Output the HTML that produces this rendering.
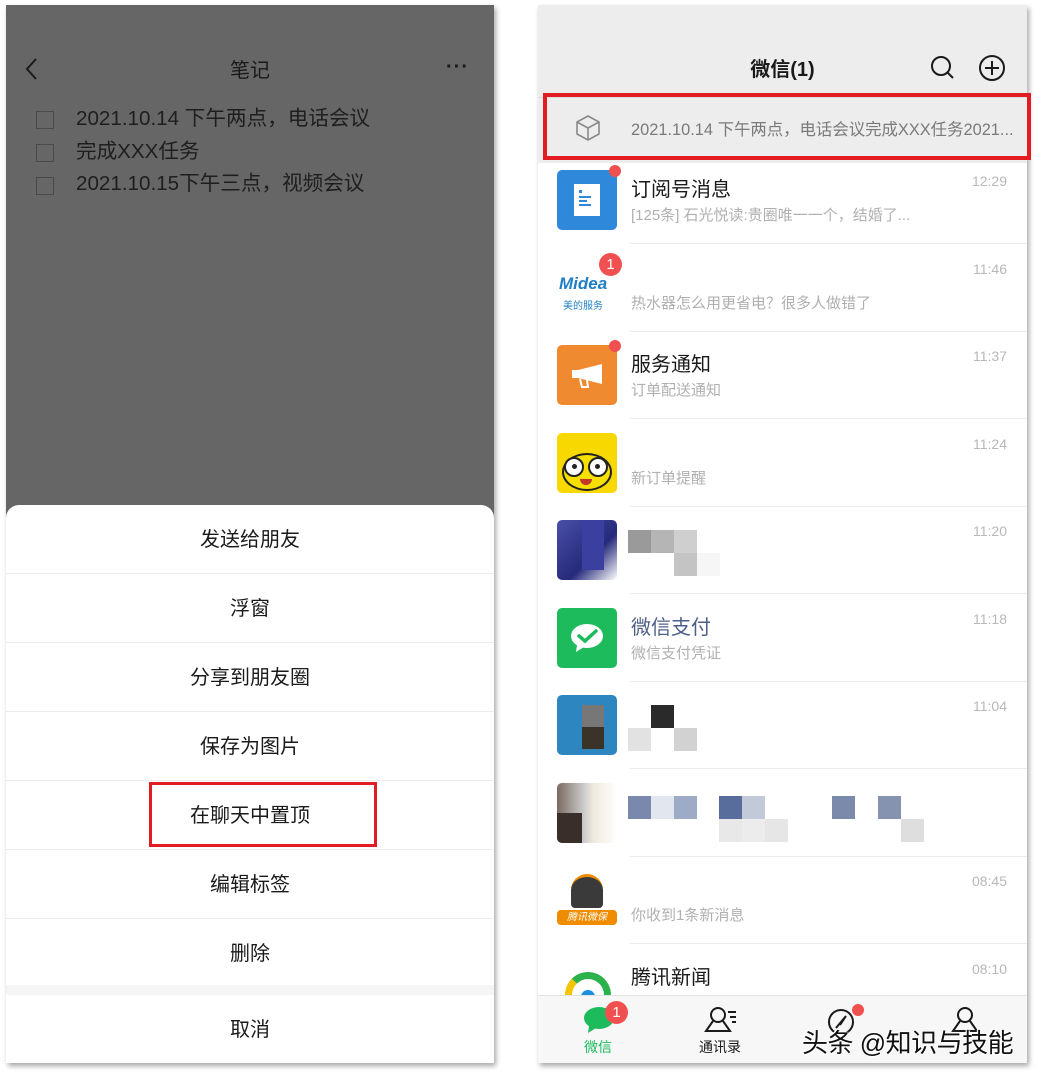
<!DOCTYPE html>
<html><head><meta charset="utf-8">
<style>
*{margin:0;padding:0;box-sizing:border-box}
body{width:1041px;height:1078px;background:#fff;position:relative;overflow:hidden;font-family:"Liberation Sans","Noto Sans CJK SC",sans-serif;color:#1a1a1a}
.a{position:absolute}
.panel{position:absolute;box-shadow:2px 3px 5px rgba(0,0,0,.35)}
.cb{position:absolute;left:36px;width:18px;height:18px;border:1.5px solid #4a4a4a}
.lt{position:absolute;left:76px;font-size:20.6px;color:#1e1e1e;line-height:24px;white-space:nowrap}
.item{position:absolute;left:0;width:488px;height:69px;line-height:70px;text-align:center;font-size:20px;color:#1a1a1a;border-bottom:1px solid #ececec}
.row{position:absolute;left:0;width:489px;height:88px}
.row .sep{position:absolute;left:92px;right:0;top:80px;height:1px;background:#ececec}
.av{position:absolute;left:19px;top:7px;width:60px;height:60px;border-radius:5px;overflow:hidden}
.tt{position:absolute;left:93px;top:10px;font-size:20px;color:#1a1a1a}
.st{position:absolute;left:93px;top:41px;font-size:15px;color:#b0b0b0;white-space:nowrap}
.tm{position:absolute;right:20px;top:10px;font-size:14px;color:#b8b8b8}
.dot{position:absolute;width:12px;height:12px;border-radius:50%;background:#f15050}
.px{position:absolute;width:23px;height:23px}
</style></head><body>

<!-- LEFT PANEL -->
<div class="panel" style="left:6px;top:5px;width:488px;height:1058px;background:#666;">
  <svg class="a" style="left:18px;top:52px" width="16" height="24"><path d="M12 2 L3 12 L12 22" stroke="#1a1a1a" stroke-width="2" fill="none"/></svg>
  <div class="a" style="left:0;width:488px;top:49px;text-align:center;font-size:20px;color:#1a1a1a">笔记</div>
  <div class="a" style="left:440px;top:51px;font-size:20px;letter-spacing:1px;color:#1a1a1a;font-weight:bold">···</div>
  <div class="cb" style="top:106px;left:30px"></div><div class="lt" style="top:102px;left:70px">2021.10.14 下午两点，电话会议</div>
  <div class="cb" style="top:139px;left:30px"></div><div class="lt" style="top:135px;left:70px">完成XXX任务</div>
  <div class="cb" style="top:172px;left:30px"></div><div class="lt" style="top:167px;left:70px">2021.10.15下午三点，视频会议</div>

  <div class="a" style="left:0;top:500px;width:488px;height:558px;background:#fff;border-radius:13px 13px 0 0;overflow:hidden">
    <div class="item" style="top:0">发送给朋友</div>
    <div class="item" style="top:69px">浮窗</div>
    <div class="item" style="top:138px">分享到朋友圈</div>
    <div class="item" style="top:207px">保存为图片</div>
    <div class="item" style="top:276px">在聊天中置顶</div>
    <div class="item" style="top:345px">编辑标签</div>
    <div class="item" style="top:414px;border:none">删除</div>
    <div class="a" style="left:0;top:480px;width:488px;height:10px;background:#f5f5f5"></div>
    <div class="item" style="top:490px;border:none">取消</div>
  </div>
</div>
<div class="a" style="left:149px;top:782px;width:228px;height:65px;border:3px solid #e31c24"></div>

<!-- RIGHT PANEL -->
<div class="panel" style="left:538px;top:5px;width:489px;height:1058px;background:#fff;overflow:hidden">
  <div class="a" style="left:0;top:0;width:489px;height:158px;background:#ededed"></div>
  <div class="a" style="left:0;top:48px;width:489px;text-align:center;font-size:20px;font-weight:bold;color:#1a1a1a">微信(1)</div>
  <svg class="a" style="left:392px;top:50px" width="26" height="26"><circle cx="11" cy="11" r="9" stroke="#1a1a1a" stroke-width="2" fill="none"/><path d="M17.5 17.5 L23 23" stroke="#1a1a1a" stroke-width="2"/></svg>
  <svg class="a" style="left:440px;top:49px" width="28" height="28"><circle cx="14" cy="14" r="12" stroke="#1a1a1a" stroke-width="2" fill="none"/><path d="M14 7V21M7 14H21" stroke="#1a1a1a" stroke-width="2"/></svg>
  <div class="a" style="left:0;top:92px;width:489px;height:1px;background:#dcdcdc"></div>
  <svg class="a" style="left:37px;top:109px" width="26" height="28"><path d="M13 2 L24 8 L24 20 L13 26 L2 20 L2 8 Z M2 8 L13 14 L24 8 M13 14 V26" stroke="#8a8a8a" stroke-width="1.6" fill="none" stroke-linejoin="round"/></svg>
  <div class="a" style="left:93px;top:111px;font-size:16.4px;color:#7a7a7a;white-space:nowrap">2021.10.14 下午两点，电话会议完成XXX任务2021...</div>

  <!-- rows -->
  <div class="row" style="top:158px">
    <div class="av" style="background:#2f88d9"><div class="a" style="left:17px;top:14px;width:26px;height:32px;background:#fff"></div><div class="a" style="left:22px;top:20px;width:3px;height:3px;background:#2f88d9"></div><div class="a" style="left:22px;top:26px;width:12px;height:2px;background:#2f88d9"></div><div class="a" style="left:22px;top:30px;width:8px;height:2px;background:#2f88d9"></div><div class="a" style="left:22px;top:34px;width:12px;height:2px;background:#2f88d9"></div></div>
    <div class="dot" style="left:71px;top:2px"></div>
    <div class="tt">订阅号消息</div><div class="st">[125条] 石光悦读:贵圈唯一一个，结婚了...</div><div class="tm">12:29</div><div class="sep"></div></div>
  <div class="row" style="top:246px">
    <div class="av" style="background:#fff"><div class="a" style="left:2px;top:16px;font-size:17px;color:#1f7fc4;font-style:italic;font-weight:bold">Midea</div><div class="a" style="left:6px;top:39px;font-size:10px;color:#1f7fc4">美的服务</div></div>
    <div class="a" style="left:61px;top:2px;width:23px;height:23px;border-radius:50%;background:#f15050;color:#fff;font-size:15px;text-align:center;line-height:23px">1</div>
    <div class="st">热水器怎么用更省电？很多人做错了</div><div class="tm">11:46</div><div class="sep"></div></div>
  <div class="row" style="top:333px">
    <div class="av" style="background:#f08a30"><svg class="a" style="left:13px;top:17px" width="36" height="28"><path d="M2 8 H8 L32 2 V22 L8 16 H2 Z" fill="#fff"/><path d="M10 17 L12 25 H18 L17 18" stroke="#fff" stroke-width="2" fill="none"/></svg></div>
    <div class="dot" style="left:71px;top:2px"></div>
    <div class="tt">服务通知</div><div class="st">订单配送通知</div><div class="tm">11:37</div><div class="sep"></div></div>
  <div class="row" style="top:421px">
    <div class="av" style="background:#f7d800"><div class="a" style="left:5px;top:20px;width:50px;height:38px;border-radius:50%;background:#f7e000;border:2px solid #222"></div><div class="a" style="left:7px;top:24px;width:20px;height:20px;border-radius:50%;background:#fff;border:2px solid #222"></div><div class="a" style="left:31px;top:24px;width:20px;height:20px;border-radius:50%;background:#fff;border:2px solid #222"></div><div class="a" style="left:15px;top:31px;width:5px;height:5px;border-radius:50%;background:#222"></div><div class="a" style="left:38px;top:31px;width:5px;height:5px;border-radius:50%;background:#222"></div><div class="a" style="left:23px;top:46px;width:12px;height:6px;border-radius:0 0 6px 6px;background:#c0392b"></div></div>
    <div class="st">新订单提醒</div><div class="tm">11:24</div><div class="sep"></div></div>
  <div class="row" style="top:508px">
    <div class="av" style="background:linear-gradient(135deg,#4a4fa8,#262a7a 60%,#fff 100%)"><div class="a" style="left:25px;top:0;width:22px;height:50px;background:#3a3fa0"></div></div>
    <div class="px" style="left:90px;top:17px;background:#9a9a9a"></div><div class="px" style="left:113px;top:17px;background:#b5b5b5"></div><div class="px" style="left:136px;top:17px;background:#cfcfcf"></div><div class="px" style="left:136px;top:40px;background:#c4c4c4"></div><div class="px" style="left:159px;top:40px;background:#f6f6f6"></div>
    <div class="tm">11:20</div><div class="sep"></div></div>
  <div class="row" style="top:596px">
    <div class="av" style="background:#1dbb5c"><svg class="a" style="left:12px;top:14px" width="36" height="32"><ellipse cx="18" cy="14" rx="16" ry="12" fill="#fff"/><path d="M8 23 L7 30 L15 25Z" fill="#fff"/><path d="M10 14 L16 19 L27 9" stroke="#1dbb5c" stroke-width="3.5" fill="none" stroke-linecap="round"/></svg></div>
    <div class="tt" style="color:#4e5f87">微信支付</div><div class="st">微信支付凭证</div><div class="tm">11:18</div><div class="sep"></div></div>
  <div class="row" style="top:683px">
    <div class="av" style="background:#2e86c0"><div class="a" style="left:25px;top:10px;width:22px;height:22px;background:#777"></div><div class="a" style="left:25px;top:32px;width:22px;height:22px;background:#3b3328"></div></div>
    <div class="px" style="left:113px;top:17px;background:#2a2a2a"></div><div class="px" style="left:90px;top:40px;background:#e2e2e2"></div><div class="px" style="left:136px;top:40px;background:#d2d2d2"></div>
    <div class="tm">11:04</div><div class="sep"></div></div>
  <div class="row" style="top:771px">
    <div class="av" style="background:linear-gradient(90deg,#7a6a60,#ccc 45%,#eee9dd 60%,#fff)"><div class="a" style="left:0;top:30px;width:25px;height:30px;background:#3a2e2a"></div></div>
    <div class="px" style="left:90px;top:20px;background:#7a88ad"></div><div class="px" style="left:113px;top:20px;background:#e2e6ee"></div><div class="px" style="left:136px;top:20px;background:#9eabc6"></div><div class="px" style="left:181px;top:20px;background:#596d9d"></div><div class="px" style="left:204px;top:20px;background:#c2cad9"></div><div class="px" style="left:294px;top:20px;background:#7b89ab"></div><div class="px" style="left:340px;top:20px;background:#8592b0"></div>
    <div class="px" style="left:181px;top:43px;background:#e8e8e8"></div><div class="px" style="left:204px;top:43px;background:#ececec"></div><div class="px" style="left:227px;top:43px;background:#e6e6e6"></div><div class="px" style="left:363px;top:43px;background:#dedede"></div>
    <div class="sep"></div></div>
  <div class="row" style="top:858px">
    <div class="av" style="background:#fff"><div class="a" style="left:14px;top:4px;width:32px;height:34px;border-radius:16px 16px 4px 4px;background:#3a3a3a;border-top:3px solid #f08c00"></div><div class="a" style="left:0;top:40px;width:60px;height:15px;border-radius:4px;background:#f08c00;color:#fff;font-size:10px;text-align:center;line-height:15px;font-style:italic">腾讯微保</div></div>
    <div class="st">你收到1条新消息</div><div class="tm">08:45</div><div class="sep"></div></div>
  <div class="row" style="top:946px">
    <div class="av" style="background:#fff"><div class="a" style="left:8px;top:14px;width:46px;height:46px;border-radius:50%;border:7px solid #f5c400;border-right-color:#2bb24c;border-top-color:#2bb24c"></div><div class="a" style="left:24px;top:32px;width:14px;height:18px;border-radius:7px;background:#1e90e0"></div></div>
    <div class="tt">腾讯新闻</div><div class="tm">08:10</div></div>

  <!-- tab bar -->
  <div class="a" style="left:0;top:990px;width:489px;height:68px;background:#f7f7f7;border-top:1px solid #e2e2e2"></div>
  <svg class="a" style="left:45px;top:1000px" width="34" height="30"><ellipse cx="16" cy="13" rx="15" ry="11" fill="#1dbb5c"/><path d="M6 21 L5 28 L13 23Z" fill="#1dbb5c"/></svg>
  <div class="a" style="left:67px;top:996px;width:23px;height:23px;border-radius:50%;background:#f15050;color:#fff;font-size:15px;text-align:center;line-height:23px">1</div>
  <div class="a" style="left:46px;top:1032px;font-size:14px;color:#1dbb5c">微信</div>
  <svg class="a" style="left:166px;top:1001px" width="36" height="30"><circle cx="14" cy="9" r="7" stroke="#1a1a1a" stroke-width="2" fill="none"/><path d="M9 15 L2 25 H26 L19 15" stroke="#1a1a1a" stroke-width="2" fill="none"/><path d="M24 6H32M26 11H32M28 16H32" stroke="#1a1a1a" stroke-width="2"/></svg>
  <div class="a" style="left:161px;top:1032px;font-size:14px;color:#1a1a1a">通讯录</div>
  <svg class="a" style="left:288px;top:1002px" width="30" height="30"><circle cx="15" cy="15" r="12" stroke="#1a1a1a" stroke-width="2" fill="none"/><path d="M20 9 L10 21 M20 9 L14 18" stroke="#1a1a1a" stroke-width="2" fill="none"/></svg>
  <div class="dot" style="left:314px;top:999px"></div>
  <svg class="a" style="left:412px;top:1001px" width="30" height="30"><circle cx="15" cy="9" r="7" stroke="#1a1a1a" stroke-width="2" fill="none"/><path d="M10 15 L3 25 H27 L20 15" stroke="#1a1a1a" stroke-width="2" fill="none"/></svg>
  <div class="a" style="left:264px;top:1018px;font-size:26px;color:#111;white-space:nowrap;letter-spacing:-0.5px;text-shadow:0 0 2px #fff,0 0 2px #fff,1px 1px 0 #fff,-1px -1px 0 #fff">头条 @知识与技能</div>
</div>
<div class="a" style="left:543px;top:93px;width:488px;height:67px;border:4px solid #e31c24"></div>
</body></html>
